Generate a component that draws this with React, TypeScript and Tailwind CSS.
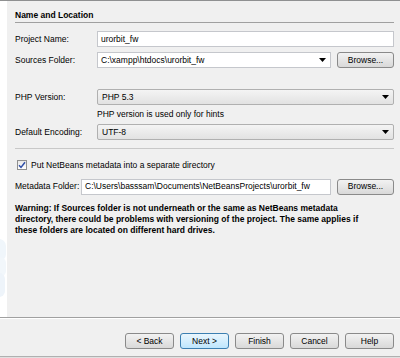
import React from "react";

const font = { fontFamily: '"Liberation Sans", Arial, sans-serif' };

function Arrow() {
  return (
    <svg width="7" height="4" viewBox="0 0 7 4" className="shrink-0">
      <path d="M0 0 H7 L3.5 4 Z" fill="#000" />
    </svg>
  );
}

function TextInput({ value, className = "" }: { value: string; className?: string }) {
  return (
    <div className={`h-[16px] bg-white border border-[#c5c7cc] flex items-center pl-[3px] text-[8.5px] text-black ${className}`}>
      {value}
    </div>
  );
}

function EditCombo({ value, className = "" }: { value: string; className?: string }) {
  return (
    <div className={`h-[16px] bg-white border border-[#c5c7cc] flex items-center pl-[3px] pr-[4px] text-[8.5px] text-black ${className}`}>
      <span className="flex-1">{value}</span>
      <Arrow />
    </div>
  );
}

function Combo({ value }: { value: string }) {
  return (
    <div className="flex-1 h-[16px] rounded-[2px] border border-[#b0b0b0] bg-gradient-to-b from-[#f4f4f4] to-[#e2e2e2] flex items-center pl-[4px] pr-[4px] text-[8.5px] text-black">
      <span className="flex-1">{value}</span>
      <Arrow />
    </div>
  );
}

function Btn({ label, primary = false, className = "" }: { label: string; primary?: boolean; className?: string }) {
  return (
    <div
      className={`h-[16px] rounded-[3px] border flex items-center justify-center text-[8.5px] text-black ${
        primary
          ? "border-[#3c7fb1] bg-gradient-to-b from-[#eaf6fd] to-[#bee6fd]"
          : "border-[#8a8a8a] bg-gradient-to-b from-[#f2f2f2] to-[#d9d9d9]"
      } ${className}`}
    >
      {label}
    </div>
  );
}

export default function App() {
  return (
    <div className="w-[400px] h-[358px] bg-[#f0f0f0] overflow-hidden flex flex-col text-black" style={font}>
      <div className="h-px bg-[#8f9091]" />
      <div className="h-[316px] flex">
        <div className="w-[7px] bg-white relative overflow-hidden">
          <div className="absolute left-[-8px] top-[238px] w-[14px] h-[22px] rounded-full bg-[#f0f6fb]" />
          <div className="absolute left-[-6px] top-[256px] w-[12px] h-[20px] rounded-full bg-[#f2f7fb]" />
          <div className="absolute left-[-7px] top-[272px] w-[12px] h-[24px] rounded-full bg-[#eef4fa]" />
        </div>
        <div className="flex-1 pl-[8px] pr-[6px] flex flex-col">
          <div className="mt-[8px] h-[12px] flex items-center text-[8.5px] font-bold">Name and Location</div>
          <div className="h-px bg-[#a0a0a0] mt-[1px]" />
          <div className="mt-[8px] flex items-center">
            <div className="w-[82px] text-[8.5px]">Project Name:</div>
            <TextInput value="urorbit_fw" className="flex-1" />
          </div>
          <div className="mt-[5px] flex items-center">
            <div className="w-[82px] text-[8.5px]">Sources Folder:</div>
            <EditCombo value="C:\xampp\htdocs\urorbit_fw" className="flex-1" />
            <Btn label="Browse..." className="ml-[6px] w-[57px]" />
          </div>
          <div className="mt-[21px] flex items-center">
            <div className="w-[82px] text-[8.5px]">PHP Version:</div>
            <Combo value="PHP 5.3" />
          </div>
          <div className="mt-[3px] h-[13px] pl-[82px] flex items-center text-[8.5px]">PHP version is used only for hints</div>
          <div className="mt-[3px] flex items-center">
            <div className="w-[82px] text-[8.5px]">Default Encoding:</div>
            <Combo value="UTF-8" />
          </div>
          <div className="h-px bg-[#c8c8c8] mt-[8px]" />
          <div className="mt-[10px] flex items-center">
            <div className="ml-[2px] w-[10px] h-[10px] border border-[#8f8f8f] bg-gradient-to-b from-[#e8e8e8] to-[#ffffff] flex items-center justify-center">
              <svg width="8" height="8" viewBox="0 0 8 8">
                <path d="M1 4.2 L3 6.4 L7 1.2" fill="none" stroke="#2f4fa8" strokeWidth="1.5" />
              </svg>
            </div>
            <div className="ml-[4px] text-[8.5px]">Put NetBeans metadata into a separate directory</div>
          </div>
          <div className="mt-[7px] flex items-center">
            <div className="w-[66px] text-[8.5px]">Metadata Folder:</div>
            <TextInput value="C:\Users\basssam\Documents\NetBeansProjects\urorbit_fw" className="flex-1" />
            <Btn label="Browse..." className="ml-[6px] w-[57px]" />
          </div>
          <div className="mt-[8px] text-[8.5px] font-bold leading-[11px] pr-[30px]">
            Warning: If Sources folder is not underneath or the same as NetBeans metadata directory, there could be problems with versioning of the project. The same applies if these folders are located on different hard drives.
          </div>
        </div>
      </div>
      <div className="h-px bg-[#a0a0a0]" />
      <div className="h-px bg-white" />
      <div className="flex-1 flex items-start pt-[14px] pr-[6px] justify-end gap-[6px]">
        <Btn label="< Back" className="w-[49px]" />
        <Btn label="Next >" primary className="w-[49px]" />
        <Btn label="Finish" className="w-[49px]" />
        <Btn label="Cancel" className="w-[49px]" />
        <Btn label="Help" className="w-[49px]" />
      </div>
      <div className="h-px bg-[#b0b0b0]" />
      <div className="h-px bg-[#e0e0e0]" />
    </div>
  );
}
